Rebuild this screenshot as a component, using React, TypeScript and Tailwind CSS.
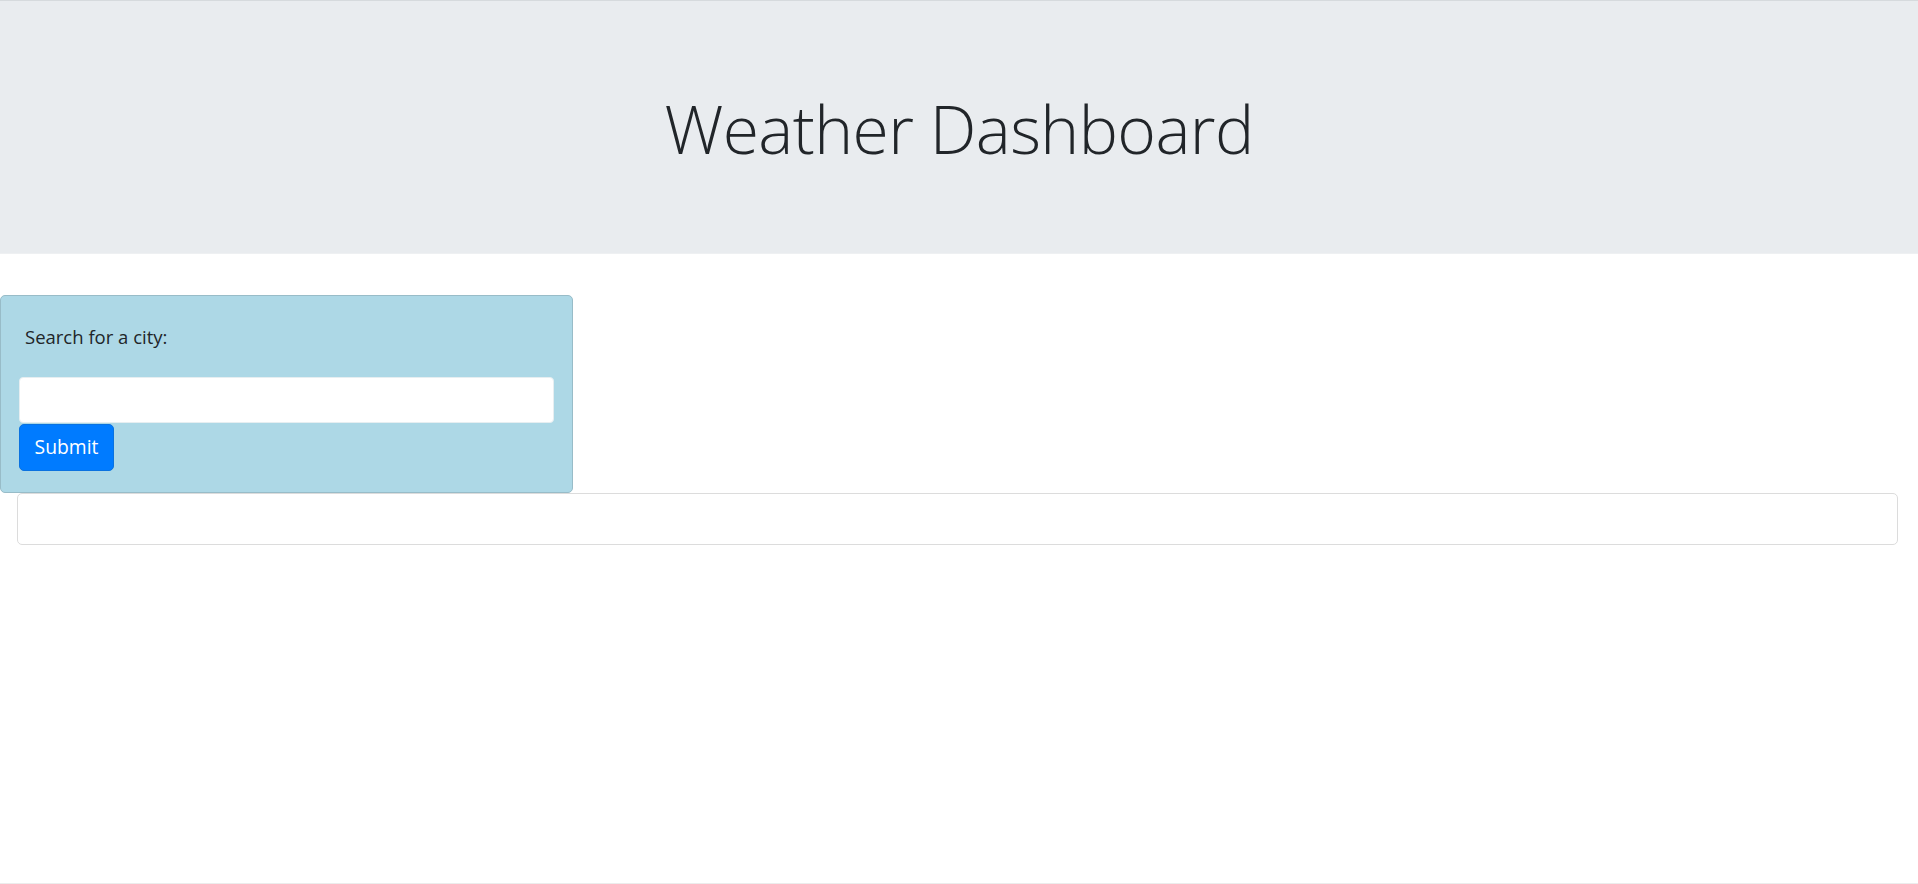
import React from "react";

export default function App() {
  return (
    <div
      className="h-[884px] w-full bg-white border-b border-[#ececec] overflow-hidden"
      style={{ fontFamily: '"Open Sans", "Noto Sans", sans-serif' }}
    >
      <header className="h-[254px] bg-[#e9ecef] border-t border-[#d6dadd] border-b border-b-[#eef0f2] flex items-center justify-center">
        <h1 className="text-[66px] font-light text-[#212529] leading-none tracking-[-0.6px] mt-[2px]">
          Weather Dashboard
        </h1>
      </header>

      <section className="mt-[41px] w-[573px] h-[198px] bg-[#add8e6] border border-[#98bcc8] rounded-[5px] pt-[28px] pl-[18px] pr-[19px]">
        <label
          htmlFor="city"
          className="block pl-[6px] text-[18.5px] text-[#212529] leading-[26px]"
        >
          Search for a city:
        </label>
        <input
          id="city"
          type="text"
          className="mt-[27px] block w-[535px] h-[46px] bg-white rounded-[4px] border border-[#e6eef1] outline-none px-3"
        />
        <button className="block w-[95px] h-[47px] mt-[1px] bg-[#007bff] text-white text-[19.3px] rounded-[5px] border border-[#0a72e0]">
          Submit
        </button>
      </section>

      <div className="ml-[17px] mr-[20px] h-[52px] border border-[#dcdcdc] rounded-[5px]" />
    </div>
  );
}
